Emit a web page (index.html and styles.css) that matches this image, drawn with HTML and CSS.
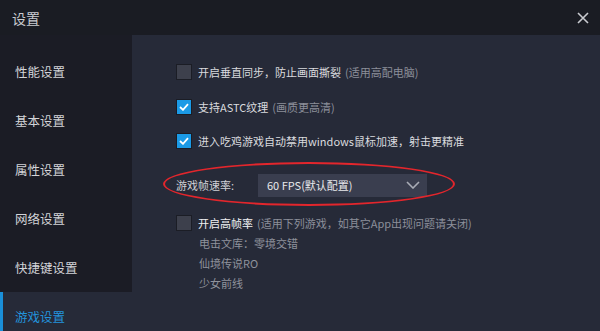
FILE: index.html
```html
<!DOCTYPE html>
<html lang="zh-CN">
<head>
    <meta charset="UTF-8">
    <title>设置</title>
    <link rel="stylesheet" href="styles.css">
</head>
<body>
    <div class="window">
        <div class="titlebar">
            <span class="title">设置</span>
            <svg class="close" width="12" height="12" viewBox="0 0 12 12">
                <path d="M1 1 L11 11 M11 1 L1 11" stroke="#c9cbd0" stroke-width="1.6" fill="none"/>
            </svg>
        </div>

        <div class="main">
            <div class="sidebar">
                <div class="nav-item">性能设置</div>
                <div class="nav-item">基本设置</div>
                <div class="nav-item">属性设置</div>
                <div class="nav-item">网络设置</div>
                <div class="nav-item">快捷键设置</div>
                <div class="nav-item active">游戏设置</div>
            </div>

            <div class="content">
                <div class="option">
                    <span class="checkbox"></span>
                    <span class="label">开启垂直同步，防止画面撕裂</span>
                    <span class="hint">(适用高配电脑)</span>
                </div>
                <div class="option">
                    <span class="checkbox checked">
                        <svg width="10" height="8" viewBox="0 0 10 8"><path d="M1 4 L4 6.8 L9 1.2" stroke="#fff" stroke-width="1.8" fill="none"/></svg>
                    </span>
                    <span class="label">支持ASTC纹理</span>
                    <span class="hint">(画质更高清)</span>
                </div>
                <div class="option">
                    <span class="checkbox checked">
                        <svg width="10" height="8" viewBox="0 0 10 8"><path d="M1 4 L4 6.8 L9 1.2" stroke="#fff" stroke-width="1.8" fill="none"/></svg>
                    </span>
                    <span class="label">进入吃鸡游戏自动禁用windows鼠标加速，射击更精准</span>
                </div>

                <div class="select-row">
                    <span class="select-label">游戏帧速率:</span>
                    <div class="select">
                        <span>60 FPS(默认配置)</span>
                        <svg width="14" height="8" viewBox="0 0 14 8"><path d="M1 1 L7 7 L13 1" stroke="#a9acb6" stroke-width="1.6" fill="none"/></svg>
                    </div>
                    <div class="circle-mark"></div>
                </div>

                <div class="option option-last">
                    <span class="checkbox"></span>
                    <span class="label bright">开启高帧率</span>
                    <span class="hint">(适用下列游戏，如其它App出现问题请关闭)</span>
                </div>
                <div class="game-list">
                    <div>电击文库：零境交错</div>
                    <div>仙境传说RO</div>
                    <div>少女前线</div>
                </div>
            </div>
        </div>
    </div>
</body>
</html>
```

FILE: styles.css
```css
* {
    margin: 0;
    padding: 0;
    box-sizing: border-box;
}

body {
    font-family: "Noto Sans CJK SC", "Noto Sans", sans-serif;
    background-color: #1a1c23;
    color: #dcdde1;
    width: 600px;
    height: 331px;
    overflow: hidden;
}

.window {
    display: flex;
    flex-direction: column;
    height: 331px;
}

.titlebar {
    height: 35px;
    flex-shrink: 0;
    display: flex;
    align-items: center;
    justify-content: space-between;
    padding: 0 11px 0 12px;
    background-color: #1a1c23;
}

.title {
    font-size: 14px;
    color: #c9cbd0;
}

.main {
    flex: 1;
    display: flex;
    overflow: hidden;
}

.sidebar {
    width: 132px;
    padding-top: 12px;
    background-color: #1b1c25;
}

.nav-item {
    height: 49px;
    display: flex;
    align-items: center;
    padding-left: 15px;
    font-size: 12.5px;
    color: #d3d4d8;
}

.nav-item.active {
    background-color: #262a38;
    border-left: 3px solid #1a8fd9;
    padding-left: 12px;
    color: #2393dc;
}

.content {
    flex: 1;
    background-color: #262a38;
    padding: 27px 0 0 44px;
}

.option {
    height: 20px;
    display: flex;
    align-items: center;
    margin-bottom: 14.5px;
    font-size: 11px;
}

.option-last {
    margin-bottom: 0;
}

.checkbox {
    width: 16px;
    height: 16px;
    border: 1px solid #1b1d25;
    background-color: #3d404c;
    margin-right: 6px;
    display: flex;
    align-items: center;
    justify-content: center;
}

.checkbox.checked {
    background-color: #1b9ae6;
}

.label {
    color: #dadbdf;
}

.label.bright {
    color: #f0f0f2;
}

.hint {
    color: #8c8f9a;
    margin-left: 4px;
}

.select-row {
    position: relative;
    height: 24px;
    margin: 22px 0 16px;
    display: flex;
    align-items: center;
    font-size: 11px;
}

.select-label {
    width: 82px;
    color: #d0d1d6;
}

.select {
    width: 169px;
    height: 23px;
    background-color: #3a3e4f;
    display: flex;
    align-items: center;
    justify-content: space-between;
    padding: 0 7px 0 9px;
    color: #e8e9ec;
}

.circle-mark {
    position: absolute;
    left: -13px;
    top: -11px;
    width: 292px;
    height: 44px;
    border: 2px solid #e3262c;
    border-radius: 50%;
}

.game-list {
    padding-left: 23px;
    font-size: 11px;
    color: #8f929c;
}

.game-list div {
    height: 20px;
    line-height: 20px;
}
```
